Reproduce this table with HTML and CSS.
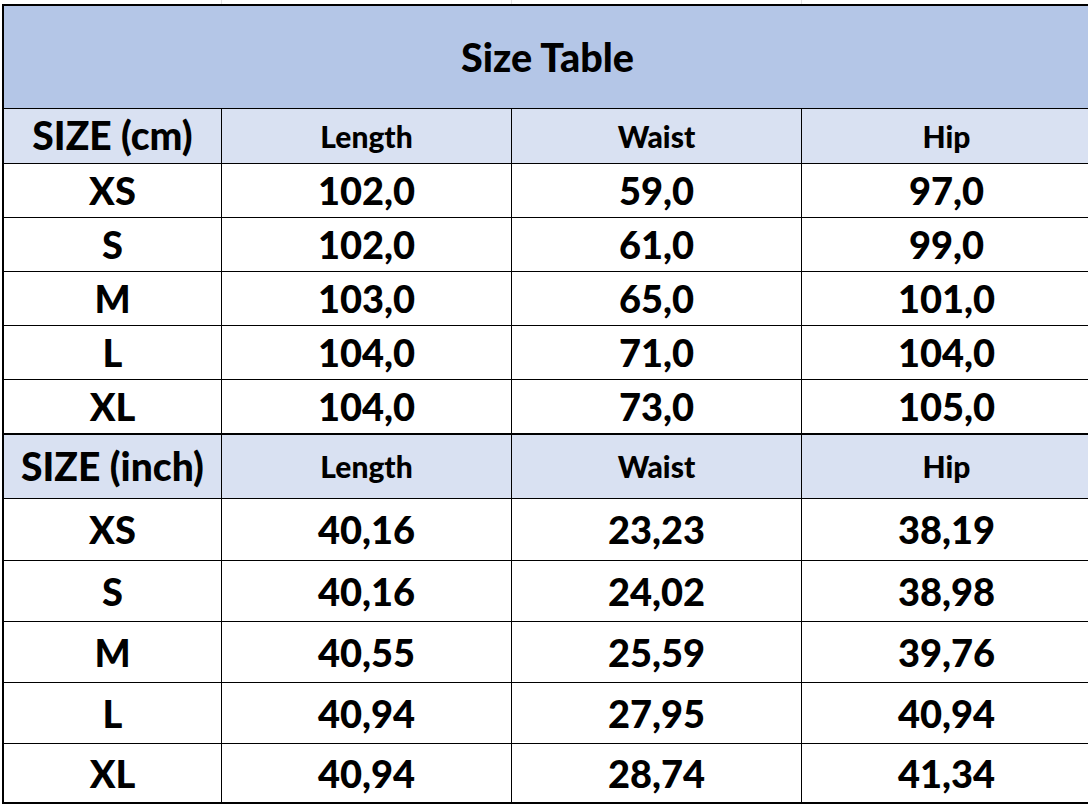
FILE: index.html
```html
<!DOCTYPE html>
<html lang="en">
<head>
<meta charset="utf-8">
<title>Size Table</title>
<link rel="stylesheet" href="styles.css">
</head>
<body>
<div class="strip">
  <div class="strip-cell first"></div>
  <div class="strip-cell"></div>
  <div class="strip-cell"></div>
  <div class="strip-cell"></div>
</div>
<div class="sheet">
  <div class="cell title">Size Table</div>

  <div class="cell head big">SIZE (cm)</div>
  <div class="cell head">Length</div>
  <div class="cell head">Waist</div>
  <div class="cell head">Hip</div>

  <div class="cell">XS</div><div class="cell">102,0</div><div class="cell">59,0</div><div class="cell">97,0</div>
  <div class="cell">S</div><div class="cell">102,0</div><div class="cell">61,0</div><div class="cell">99,0</div>
  <div class="cell">M</div><div class="cell">103,0</div><div class="cell">65,0</div><div class="cell">101,0</div>
  <div class="cell">L</div><div class="cell">104,0</div><div class="cell">71,0</div><div class="cell">104,0</div>
  <div class="cell sep">XL</div><div class="cell sep">104,0</div><div class="cell sep">73,0</div><div class="cell sep">105,0</div>

  <div class="cell head big">SIZE (inch)</div>
  <div class="cell head">Length</div>
  <div class="cell head">Waist</div>
  <div class="cell head">Hip</div>

  <div class="cell">XS</div><div class="cell">40,16</div><div class="cell">23,23</div><div class="cell">38,19</div>
  <div class="cell">S</div><div class="cell">40,16</div><div class="cell">24,02</div><div class="cell">38,98</div>
  <div class="cell">M</div><div class="cell">40,55</div><div class="cell">25,59</div><div class="cell">39,76</div>
  <div class="cell">L</div><div class="cell">40,94</div><div class="cell">27,95</div><div class="cell">40,94</div>
  <div class="cell last">XL</div><div class="cell last">40,94</div><div class="cell last">28,74</div><div class="cell last">41,34</div>
</div>
</body>
</html>
```

FILE: styles.css
```css
html, body {
  margin: 0;
  padding: 0;
  background: #ffffff;
  overflow: hidden;
}

body {
  width: 1088px;
  height: 804px;
  font-family: Lato, "Open Sans", "Liberation Sans", sans-serif;
  font-weight: 900;
  color: #000000;
}

.strip {
  display: grid;
  grid-template-columns: 218px 290px 290px 290px;
  height: 4px;
  margin-left: 4px;
}

.strip-cell {
  box-sizing: border-box;
  border-right: 1px solid #e2e2e2;
}

.sheet {
  display: grid;
  grid-template-columns: 218px 290px 290px 290px;
  grid-template-rows: 103px 55px 54px 54px 54px 54px 55px 64px 62px 61px 61px 61px 60px;
  width: 1088px;
  margin-left: 2px;
  border-left: 2px solid #000;
  border-top: 2px solid #000;
}

.cell {
  box-sizing: border-box;
  display: flex;
  align-items: center;
  justify-content: center;
  border-right: 1px solid #000;
  border-bottom: 1px solid #000;
  font-size: 38px;
  line-height: 1;
  white-space: nowrap;
  padding-bottom: 1px;
}

.title {
  grid-column: 1 / span 4;
  background: #b4c6e7;
  padding-left: 0;
  font-size: 39.5px;
}

.head {
  background: #d9e1f2;
  font-size: 30px;
}

.head.big {
  font-size: 39px;
}

.sep {
  border-bottom-width: 2px;
}

.last {
  border-bottom-width: 2px;
}
```
